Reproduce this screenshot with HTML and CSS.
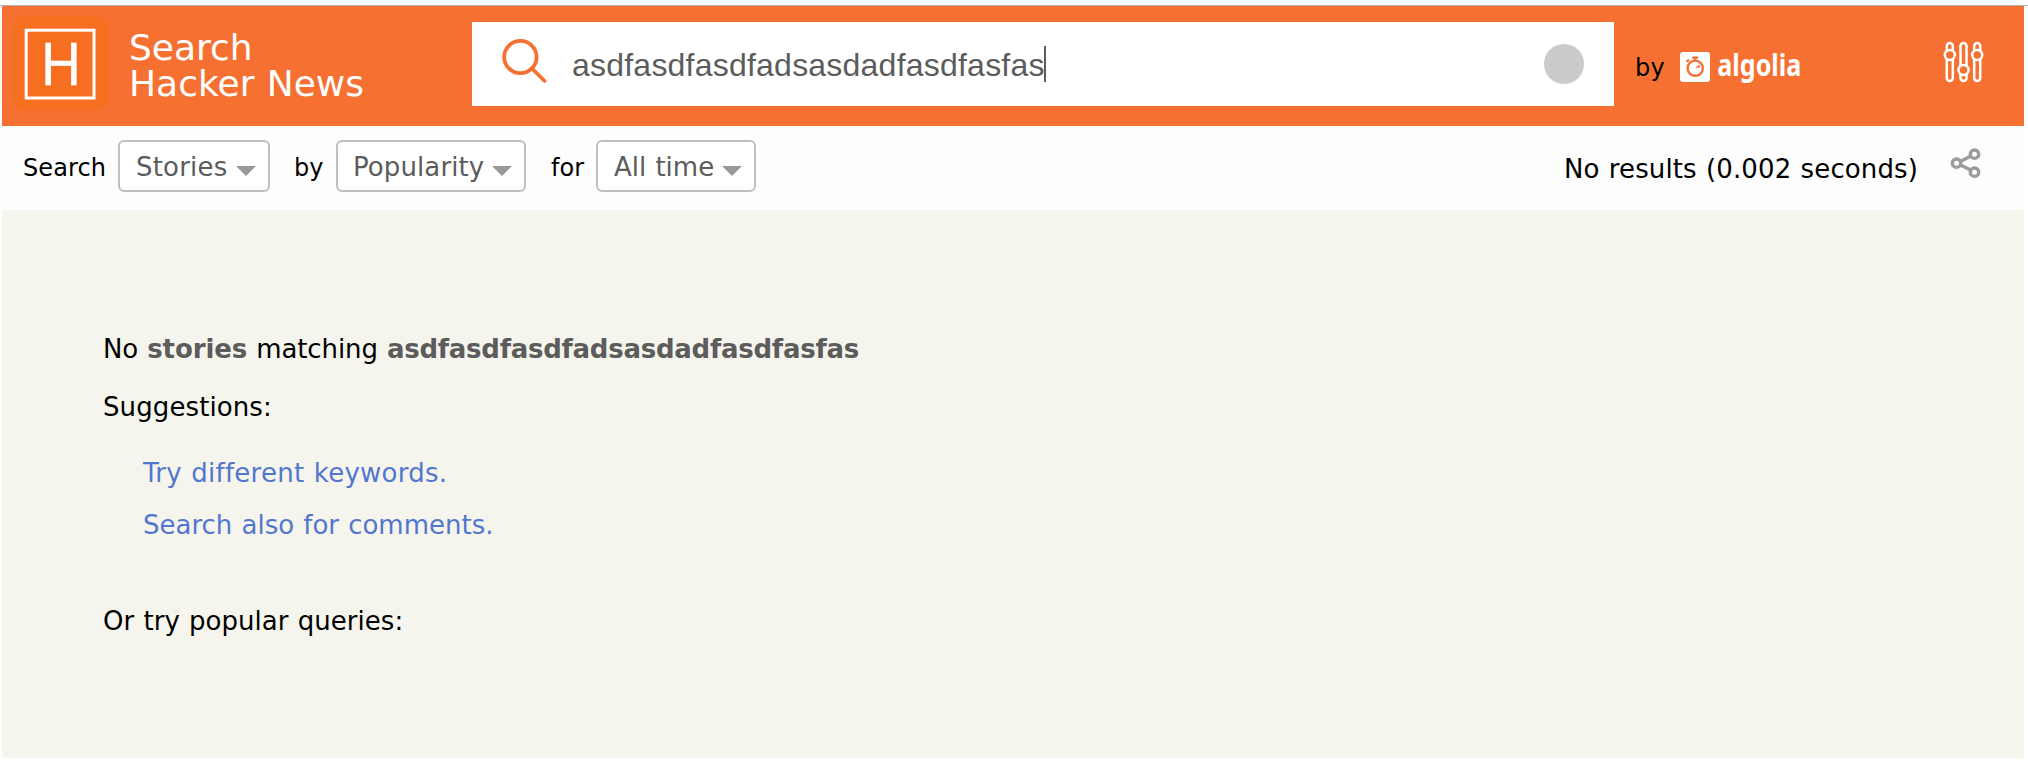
FILE: index.html
```html
<!DOCTYPE html>
<html lang="en">
<head>
<meta charset="utf-8">
<title>Search Hacker News</title>
<link rel="stylesheet" href="styles.css">
</head>
<body>
<div class="page">
  <header class="header">
    <a class="logo">
      <svg class="logo-mark" width="96" height="96" viewBox="0 0 96 96">
        <rect class="logo-tile" width="95" height="95" rx="13"/>
        <rect class="logo-frame" x="13.2" y="14.2" width="67.8" height="67.8"/>
        <text class="logo-letter" x="28.3" y="69" textLength="39.5" lengthAdjust="spacingAndGlyphs">H</text>
      </svg>
      <span class="logo-title">Search<br>Hacker News</span>
    </a>
    <div class="search-box">
      <svg class="search-icon" width="48" height="48" viewBox="0 0 48 48">
        <circle cx="20.4" cy="20" r="16.2"/>
        <path d="M32 31.5L44.6 44"/>
      </svg>
      <span class="query">asdfasdfasdfadsasdadfasdfasfas</span>
      <span class="caret"></span>
      <span class="clear-dot"></span>
    </div>
    <span class="by">by</span>
    <svg class="algolia" width="124" height="44" viewBox="0 0 124 44">
      <rect class="a-tile" x="0" y="6" width="30" height="30" rx="3"/>
      <circle class="a-ring" cx="15.2" cy="22.2" r="7.6"/>
      <path class="a-hand" d="M15.2 22.2l3.8-3.6a5.2 5.2 0 0 1 1.2 2.6z"/>
      <path class="a-knob" d="M12.2 11.6h6M15.2 12v3M6.6 15.8l2.4-2.2"/>
      <text class="a-word" x="37.3" y="30" textLength="84" lengthAdjust="spacingAndGlyphs">algolia</text>
    </svg>
    <svg class="settings" width="42" height="42" viewBox="0 0 42 42">
      <rect x="3.8" y="2" width="6" height="38" rx="3"/>
      <rect x="17.5" y="2" width="6" height="38" rx="3"/>
      <rect x="31.2" y="2" width="6" height="38" rx="3"/>
      <circle cx="6.8" cy="14" r="5"/>
      <circle cx="20.5" cy="29" r="5"/>
      <circle cx="34.2" cy="14" r="5"/>
    </svg>
  </header>

  <div class="filters">
    <span class="label label-search">Search</span>
    <span class="select select-type">Stories<i class="arrow"></i></span>
    <span class="label label-by">by</span>
    <span class="select select-sort">Popularity<i class="arrow"></i></span>
    <span class="label label-for">for</span>
    <span class="select select-time">All time<i class="arrow"></i></span>
    <span class="stats">No results (0.002 seconds)</span>
    <svg class="share" width="32" height="32" viewBox="0 0 32 32">
      <path d="M10.8 14.2L20.3 9.3M10.8 18.2L20.3 22.8"/>
      <circle cx="6.5" cy="16.2" r="4.2"/>
      <circle cx="24.5" cy="7.2" r="4.2"/>
      <circle cx="24.5" cy="25.2" r="4.2"/>
    </svg>
  </div>

  <main class="content">
    <p class="none">No <b>stories</b> matching <b class="term">asdfasdfasdfadsasdadfasdfasfas</b></p>
    <p class="suggest">Suggestions:</p>
    <ul class="links">
      <li class="try">Try different keywords.</li>
      <li>Search also for comments.</li>
    </ul>
    <p class="popular">Or try popular queries:</p>
  </main>
</div>
</body>
</html>
```
FILE: styles.css
```css
* { box-sizing: border-box; }
body { margin: 0; background: #fff; }
.page {
  height: 764px;
  padding: 0 4px 6px 2px;
  display: flex;
  flex-direction: column;
  font-family: "DejaVu Sans", Verdana, sans-serif;
  font-size: 26px;
  line-height: 30px;
  word-spacing: 0.034em;
  font-variant-ligatures: none;
  color: #000;
  white-space: nowrap;
  background: linear-gradient(#b2b2b2, #b2b2b2) 0 5px / 100% 1px no-repeat;
}
.header {
  margin-top: 6px;
  height: 120px;
  flex: none;
  display: flex;
  align-items: flex-start;
  background: #f67032;
}
.logo { width: 470px; display: flex; padding: 10px 0 0 11px; }
.logo-mark { flex: none; }
.logo-tile { fill: #f66f20; }
.logo-frame { fill: none; stroke: #fff; stroke-width: 3; }
.logo-letter { fill: #fff; stroke: #fff; stroke-width: 0.4; font: 61px "Liberation Sans", Arial, sans-serif; }
.logo-title { margin: 14px 0 0 20px; font-size: 36px; line-height: 36px; color: #fff; }
.search-box {
  width: 1142px;
  height: 84px;
  margin-top: 16px;
  padding-left: 28px;
  display: flex;
  align-items: center;
  background: #fff;
}
.search-icon { margin-top: -6px; fill: none; stroke: #f67032; stroke-width: 3.8; stroke-linecap: round; }
.query {
  margin-left: 24px;
  font: 32px/36px "Liberation Sans", Arial, sans-serif;
  letter-spacing: 0.22px;
  color: #5c5c5c;
  padding-top: 2px;
}
.caret { width: 2px; height: 36px; margin-left: -1px; background: #5c5c5c; }
.clear-dot { width: 40px; height: 40px; margin-left: auto; margin-right: 30px; border-radius: 50%; background: #cbcbcb; }
.by { margin: 47px 0 0 21px; width: 45px; font-size: 24px; letter-spacing: 0.2px; }
.algolia { margin-top: 40px; overflow: visible; }
.a-tile { fill: #fff; }
.a-ring { fill: none; stroke: #f67032; stroke-width: 2.4; }
.a-hand { fill: #f67032; }
.a-knob { fill: none; stroke: #f67032; stroke-width: 2.2; }
.a-word { fill: #fff; font: 700 29.5px "Noto Sans", "Open Sans", sans-serif; }
.settings { margin: 35px 39px 0 auto; fill: #f67032; stroke: #fff; stroke-width: 2.5; }
.filters {
  height: 84px;
  flex: none;
  display: flex;
  align-items: flex-start;
  padding-top: 14px;
  background: #fdfdfd;
}
.label { font-size: 24px; padding-top: 13px; letter-spacing: 0.1px; }
.label-search { width: 95px; margin-left: 21px; }
.label-by { width: 42px; margin-left: 24px; }
.label-for { width: 45px; margin-left: 25px; }
.select {
  height: 52px;
  padding: 10px 12px 0 16px;
  display: flex;
  justify-content: space-between;
  border: 2px solid #bfbfbf;
  border-radius: 6px;
  color: #5c5c5c;
  background: #fff;
}
.select-type { width: 152px; letter-spacing: 0.2px; }
.select-sort { width: 190px; padding-left: 15px; letter-spacing: 0.1px; }
.select-time { width: 160px; }
.arrow {
  width: 20px;
  height: 10px;
  margin-top: 14px;
  background: #999;
  clip-path: polygon(0 0, 100% 0, 50% 100%);
}
.stats { margin-left: auto; padding-top: 14px; letter-spacing: 0.12px; }
.share { margin: 7px 42px 0 32px; fill: none; stroke: #9b9b9b; stroke-width: 3.4; }
.content { flex: 1; padding: 124px 0 0 101px; background: #f6f5ed; }
.content p { margin: 0; }
.none { letter-spacing: -0.1px; }
.none b { color: #5c5c5c; }
.none .term { letter-spacing: -0.26px; }
.content .suggest { margin-top: 28px; letter-spacing: 0.1px; }
.links { list-style: none; margin: 36px 0 0 40px; padding: 0; color: #5277cf; }
.links li + li { margin-top: 22px; }
.try { letter-spacing: 0.25px; }
.content .popular { margin-top: 66px; letter-spacing: 0.04px; }
```
